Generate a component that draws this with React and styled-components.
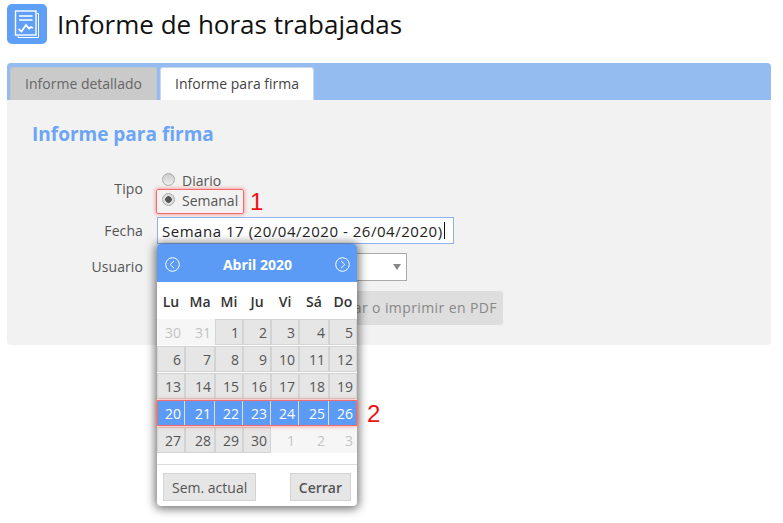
import React from 'react';
import styled, { createGlobalStyle } from 'styled-components';

const weekDays = ['Lu', 'Ma', 'Mi', 'Ju', 'Vi', 'Sá', 'Do'];
const weeks = [
  [[30, 'off'], [31, 'off'], [1], [2], [3], [4], [5]],
  [[6], [7], [8], [9], [10], [11], [12]],
  [[13], [14], [15], [16], [17], [18], [19]],
  [[20, 'sel'], [21, 'sel'], [22, 'sel'], [23, 'sel'], [24, 'sel'], [25, 'sel'], [26, 'sel']],
  [[27], [28], [29], [30], [1, 'off'], [2, 'off'], [3, 'off']],
];

function ReportIcon() {
  return (
    <Logo>
      <svg width="26" height="29" viewBox="0 0 26 29" fill="none" stroke="#fff">
        <path d="M23 3.5h1.5v24H4V26" strokeWidth="1" />
        <rect x="1.5" y="1" width="20.5" height="24" strokeWidth="1.4" fill="#5f9ff7" />
        <path d="M5 6h13.5M5 10h13.5" strokeWidth="1.6" />
        <path d="M4.5 19l3 2.5 4.5-6.5 3 3.5 2-1.5 2 1" strokeWidth="1.8" />
      </svg>
    </Logo>
  );
}

function Arrow({ dir }) {
  return (
    <svg width="15" height="15" viewBox="0 0 15 15" fill="none" stroke="#fff" strokeWidth="1">
      <circle cx="7.5" cy="7.5" r="6.8" />
      <path d={dir === 'left' ? 'M9 3.8L5.2 7.5 9 11.2' : 'M6 3.8L9.8 7.5 6 11.2'} />
    </svg>
  );
}

export default function App() {
  return (
    <Page>
      <GlobalStyle />
      <Header>
        <ReportIcon />
        <Title>Informe de horas trabajadas</Title>
      </Header>
      <TabBar>
        <Tab>Informe detallado</Tab>
        <Tab $active>Informe para firma</Tab>
      </TabBar>
      <Panel>
        <Heading>Informe para firma</Heading>
        <Row $top={0}>
          <Label $pad={8}>Tipo</Label>
          <Radios>
            <RadioItem>
              <Radio />
              Diario
            </RadioItem>
            <RadioItem>
              <Radio $checked />
              Semanal
            </RadioItem>
            <RadioMark />
            <Number $left={93} $top={17}>1</Number>
          </Radios>
        </Row>
        <Row $top={7}>
          <Label>Fecha</Label>
          <FieldWrap>
            <DateInput>
              Semana 17 (20/04/2020 - 26/04/2020)<Caret />
            </DateInput>
            <Calendar>
              <CalHead>
                <Arrow dir="left" />
                <span>Abril 2020</span>
                <Arrow dir="right" />
              </CalHead>
              <DayNames>
                {weekDays.map((d) => <span key={d}>{d}</span>)}
              </DayNames>
              <Weeks>
                {weeks.map((w, i) => (
                  <Week key={i}>
                    {w.map(([n, kind]) => (
                      <Day key={n} $kind={kind}>{n}</Day>
                    ))}
                  </Week>
                ))}
                <WeekMark />
                <Number $left={210} $top={81}>2</Number>
              </Weeks>
              <CalFooter>
                <CalButton>Sem. actual</CalButton>
                <CalButton $strong>Cerrar</CalButton>
              </CalFooter>
            </Calendar>
          </FieldWrap>
        </Row>
        <Row $top={9}>
          <Label>Usuario</Label>
          <Select><Triangle /></Select>
        </Row>
        <ButtonRow>
          <PdfButton>Descargar o imprimir en PDF</PdfButton>
        </ButtonRow>
      </Panel>
    </Page>
  );
}

const GlobalStyle = createGlobalStyle`
  * { box-sizing: border-box; }
  body {
    margin: 0;
    background: #fff;
    font-family: "Open Sans", sans-serif;
    color: #555;
  }
`;

const Page = styled.div`
  width: 783px;
  height: 523px;
  padding: 4px 12px 0 7px;
  overflow: hidden;
`;

const Header = styled.header`
  display: flex;
  align-items: center;
  gap: 10px;
  height: 40px;
`;

const Logo = styled.div`
  width: 40px;
  height: 40px;
  border-radius: 5px;
  background: #5f9ff7;
  display: flex;
  align-items: center;
  justify-content: center;
`;

const Title = styled.h1`
  margin: 0;
  font-size: 26px;
  font-weight: 400;
  color: #111;
`;

const TabBar = styled.nav`
  margin-top: 19px;
  height: 37px;
  background: #94bcf0;
  border-radius: 4px 4px 0 0;
  padding: 4px 0 0 3px;
  display: flex;
  gap: 3px;
`;

const Tab = styled.div`
  width: ${(p) => (p.$active ? '154px' : '147px')};
  height: 33px;
  padding-bottom: 2px;
  display: flex;
  align-items: center;
  justify-content: center;
  font-size: 14px;
  border-radius: 3px 3px 0 0;
  background: ${(p) => (p.$active ? '#fff' : '#cacaca')};
  color: ${(p) => (p.$active ? '#444' : '#666')};
  border: 1px solid ${(p) => (p.$active ? '#c9d6e8' : '#c0c6ce')};
  border-bottom: none;
`;

const Panel = styled.main`
  height: 245px;
  background: #f2f2f2;
  border-radius: 0 0 4px 4px;
  padding: 20px 0 0 25px;
`;

const Heading = styled.h2`
  margin: 0 0 23px;
  font-size: 19px;
  line-height: 28px;
  font-weight: 700;
  color: #6ca5f5;
`;

const Row = styled.div`
  display: flex;
  margin-top: ${(p) => p.$top}px;
  margin-left: -25px;
`;

const Label = styled.div`
  width: 136px;
  margin-right: 14px;
  padding-top: ${(p) => p.$pad || 4}px;
  text-align: right;
  font-size: 14px;
  line-height: 20px;
  letter-spacing: 0.1px;
  color: #555;
`;

const Radios = styled.div`
  position: relative;
  display: flex;
  flex-direction: column;
  gap: 1px;
  padding: 0 0 0 5px;
`;

const RadioItem = styled.label`
  display: flex;
  align-items: center;
  gap: 7px;
  height: 19px;
  font-size: 14px;
  color: #555;
`;

const Radio = styled.span`
  width: 13px;
  height: 13px;
  margin-bottom: 3px;
  border-radius: 50%;
  border: 1px solid #a9a9a9;
  background: ${(p) =>
    p.$checked
      ? 'radial-gradient(circle, #555 0 3px, #ddd 3.6px)'
      : 'linear-gradient(#ccc, #eee)'};
`;

const RadioMark = styled.div`
  position: absolute;
  left: -1px;
  top: 18px;
  width: 88px;
  height: 25px;
  border: 1px solid #f56a6a;
  border-radius: 2px;
  box-shadow: 0 0 4px rgba(245, 80, 80, 0.7);
`;

const Number = styled.span`
  position: absolute;
  left: ${(p) => p.$left}px;
  top: ${(p) => p.$top}px;
  font-family: "Liberation Sans", sans-serif;
  font-size: 24px;
  line-height: 27px;
  color: #f01010;
`;

const FieldWrap = styled.div`
  position: relative;
`;

const DateInput = styled.div`
  width: 297px;
  height: 27px;
  padding-left: 4px;
  display: flex;
  align-items: center;
  background: #fff;
  border: 1px solid #8fb2ee;
  font-size: 15px;
  letter-spacing: 0.53px;
  color: #222;
  white-space: nowrap;
`;

const Caret = styled.i`
  width: 1px;
  height: 17px;
  margin-left: 1px;
  background: #111;
`;

const Calendar = styled.div`
  position: absolute;
  z-index: 2;
  left: 0;
  top: 27px;
  width: 200px;
  height: 262px;
  background: #fff;
  border-radius: 4px;
  overflow: visible;
  box-shadow: 0 1px 10px 2px rgba(0, 0, 0, 0.55);
`;

const CalHead = styled.div`
  height: 38px;
  padding: 2px 7px 0 8px;
  display: flex;
  align-items: center;
  justify-content: space-between;
  background: #5b9bf5;
  border-radius: 4px 4px 0 0;
  color: #fff;
  font-size: 14px;
  font-weight: 700;
`;

const DayNames = styled.div`
  height: 37px;
  padding-top: 2px;
  display: grid;
  grid-template-columns: 28px 30px 28px 28px 28px 30px 28px;
  align-items: center;
  justify-items: center;
  font-size: 14px;
  font-weight: 600;
  color: #333;
`;

const Weeks = styled.div`
  position: relative;
  display: flex;
  flex-direction: column;
  gap: 1px;
`;

const Week = styled.div`
  display: grid;
  grid-template-columns: 28px 30px 28px 28px 28px 30px 28px;
  height: 26px;
`;

const Day = styled.div`
  padding: 0 3px 0 0;
  display: flex;
  align-items: center;
  justify-content: flex-end;
  font-size: 14px;
  border: 1px solid ${(p) => (p.$kind === 'off' ? '#f6f6f6' : '#d3d3d3')};
  background: ${(p) =>
    p.$kind === 'sel' ? '#5b9bf5' : p.$kind === 'off' ? '#f6f6f6' : '#e6e6e6'};
  color: ${(p) =>
    p.$kind === 'sel' ? '#fff' : p.$kind === 'off' ? '#c4c4c4' : '#555'};
  font-weight: ${(p) => (p.$kind === 'sel' ? 500 : 400)};
  ${(p) => p.$kind === 'sel' && 'border-color: #5b9bf5 #ddd #5b9bf5 #5b9bf5;'}
`;

const WeekMark = styled.div`
  position: absolute;
  left: 0;
  top: 81px;
  width: 200px;
  height: 26px;
  border: 1px solid #f56a6a;
  box-shadow: 0 0 4px rgba(245, 80, 80, 0.7);
`;

const CalFooter = styled.div`
  margin-top: 11px;
  height: 42px;
  padding: 8px 6px 0;
  display: flex;
  align-items: flex-start;
  justify-content: space-between;
  border-top: 1px solid #ddd;
`;

const CalButton = styled.div`
  height: 28px;
  padding: 0 8px;
  display: flex;
  align-items: center;
  background: #e6e6e6;
  border: 1px solid #d3d3d3;
  font-size: 14px;
  font-weight: ${(p) => (p.$strong ? 600 : 400)};
  color: #555;
`;

const Select = styled.div`
  width: 250px;
  height: 28px;
  background: #fff;
  border: 1px solid #aaa;
  position: relative;
`;

const Triangle = styled.i`
  position: absolute;
  right: 5px;
  top: 10px;
  border-style: solid;
  border-width: 6px 4px 0;
  border-color: #888 transparent transparent;
`;

const ButtonRow = styled.div`
  margin-top: 10px;
  margin-left: -25px;
  width: 496px;
  display: flex;
  justify-content: flex-end;
`;

const PdfButton = styled.div`
  height: 34px;
  padding: 0 6px 2px 9px;
  display: flex;
  align-items: center;
  background: #dedede;
  border-radius: 3px;
  font-size: 14px;
  letter-spacing: 0.4px;
  color: #888;
  white-space: nowrap;
`;
